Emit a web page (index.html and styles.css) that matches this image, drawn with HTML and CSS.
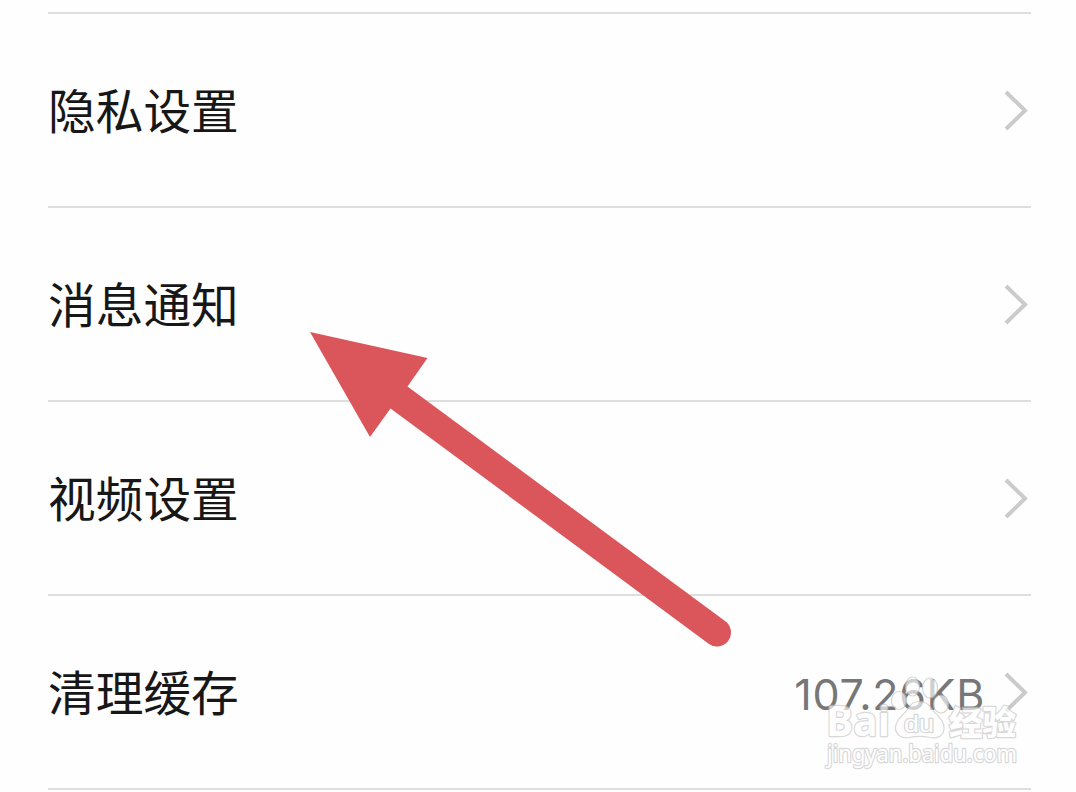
FILE: index.html
```html
<!DOCTYPE html>
<html lang="zh-CN">
<head>
<meta charset="utf-8">
<title>设置</title>
<link rel="stylesheet" href="styles.css">
</head>
<body>
<main class="screen">
  <ul class="settings">
    <li class="row"><span class="label">隐私设置</span><svg class="chevron" viewBox="0 0 26 42"><path d="M3 3L22 21.500L3 40"/></svg></li>
    <li class="row"><span class="label">消息通知</span><svg class="chevron" viewBox="0 0 26 42"><path d="M3 3L22 21.500L3 40"/></svg></li>
    <li class="row"><span class="label">视频设置</span><svg class="chevron" viewBox="0 0 26 42"><path d="M3 3L22 21.500L3 40"/></svg></li>
    <li class="row"><span class="label">清理缓存</span><span class="value">107.26KB</span><svg class="chevron" viewBox="0 0 26 42"><path d="M3 3L22 21.500L3 40"/></svg></li>
  </ul>
  <svg class="arrow" viewBox="0 0 424 318" aria-hidden="true">
    <path d="M1 2L118.500 28L98.500 56.500L416 291A14 14 0 0 1 400 314L81.500 78.500L61 107Z"/>
  </svg>
  <svg class="watermark" viewBox="0 0 210 104" aria-hidden="true">
    <g class="mark">
      <ellipse cx="92.500" cy="14.500" rx="7" ry="9.500"/>
      <ellipse cx="110" cy="16" rx="7.500" ry="10"/>
      <ellipse cx="79" cy="28.500" rx="7.500" ry="9"/>
      <ellipse cx="121" cy="32" rx="7.500" ry="9"/>
      <path d="M99 29.500C105 29.500 109 32 112 37C116 43 124 47 124 56C124 64 118 67 110 65.500C103 64 96 64 89 65.500C81 67 75 62 75.500 55C76 47 83 44 87 38C90 32 94 29.500 99 29.500Z"/>
      <text class="brand" x="6" y="63.500" textLength="64" lengthAdjust="spacingAndGlyphs">Bai</text>
      <text class="du" x="84" y="60" textLength="30" lengthAdjust="spacingAndGlyphs">du</text>
      <text class="cjk" x="129" y="63" textLength="67" lengthAdjust="spacingAndGlyphs">经验</text>
      <text class="url" x="7" y="90" textLength="190" lengthAdjust="spacingAndGlyphs">jingyan.baidu.com</text>
    </g>
  </svg>
</main>
</body>
</html>
```
FILE: styles.css
```css
body {
  margin: 0;
  background: #fefefe;
  font-family: "Inter", "Noto Sans CJK SC", sans-serif;
}
.screen {
  position: relative;
  box-sizing: border-box;
  height: 792px;
  padding: 12px 45px 0 48px;
  overflow: hidden;
}
.settings {
  margin: 0;
  padding: 0;
  list-style: none;
  border-top: 2px solid #dedede;
}
.row {
  box-sizing: border-box;
  display: flex;
  align-items: center;
  height: 194px;
  border-bottom: 2px solid #dedede;
}
.label {
  flex: 1;
  padding-bottom: 2px;
  font-family: "Noto Sans CJK SC", sans-serif;
  font-size: 47.700px;
  line-height: 70px;
  color: #171717;
}
.value {
  padding-top: 3px;
  margin-right: 18px;
  font-size: 43px;
  line-height: 60px;
  letter-spacing: 0.7px;
  color: #777;
}
.chevron {
  width: 26px;
  height: 42px;
  margin-right: 2px;
  fill: none;
  stroke: #cbcbcb;
  stroke-width: 4;
}
.arrow {
  position: absolute;
  left: 309px;
  top: 330px;
  width: 424px;
  height: 318px;
  fill: #db565b;
}
.watermark {
  position: absolute;
  left: 820px;
  top: 672px;
  width: 210px;
  height: 104px;
}
.mark {
  fill: #fff;
  stroke: #c4c4c4;
  stroke-width: 1.2;
  opacity: 0.65;
}
.mark text {
  stroke-width: 2.4;
  stroke-linejoin: round;
  paint-order: stroke;
}
.brand {
  font: 700 42px "Open Sans", "Noto Sans", sans-serif;
}
.du {
  font: 400 24px "Liberation Sans", sans-serif;
}
.cjk {
  font: 900 33px "Noto Sans CJK SC", sans-serif;
}
.url {
  font: 400 23px "Noto Sans", sans-serif;
}
```
